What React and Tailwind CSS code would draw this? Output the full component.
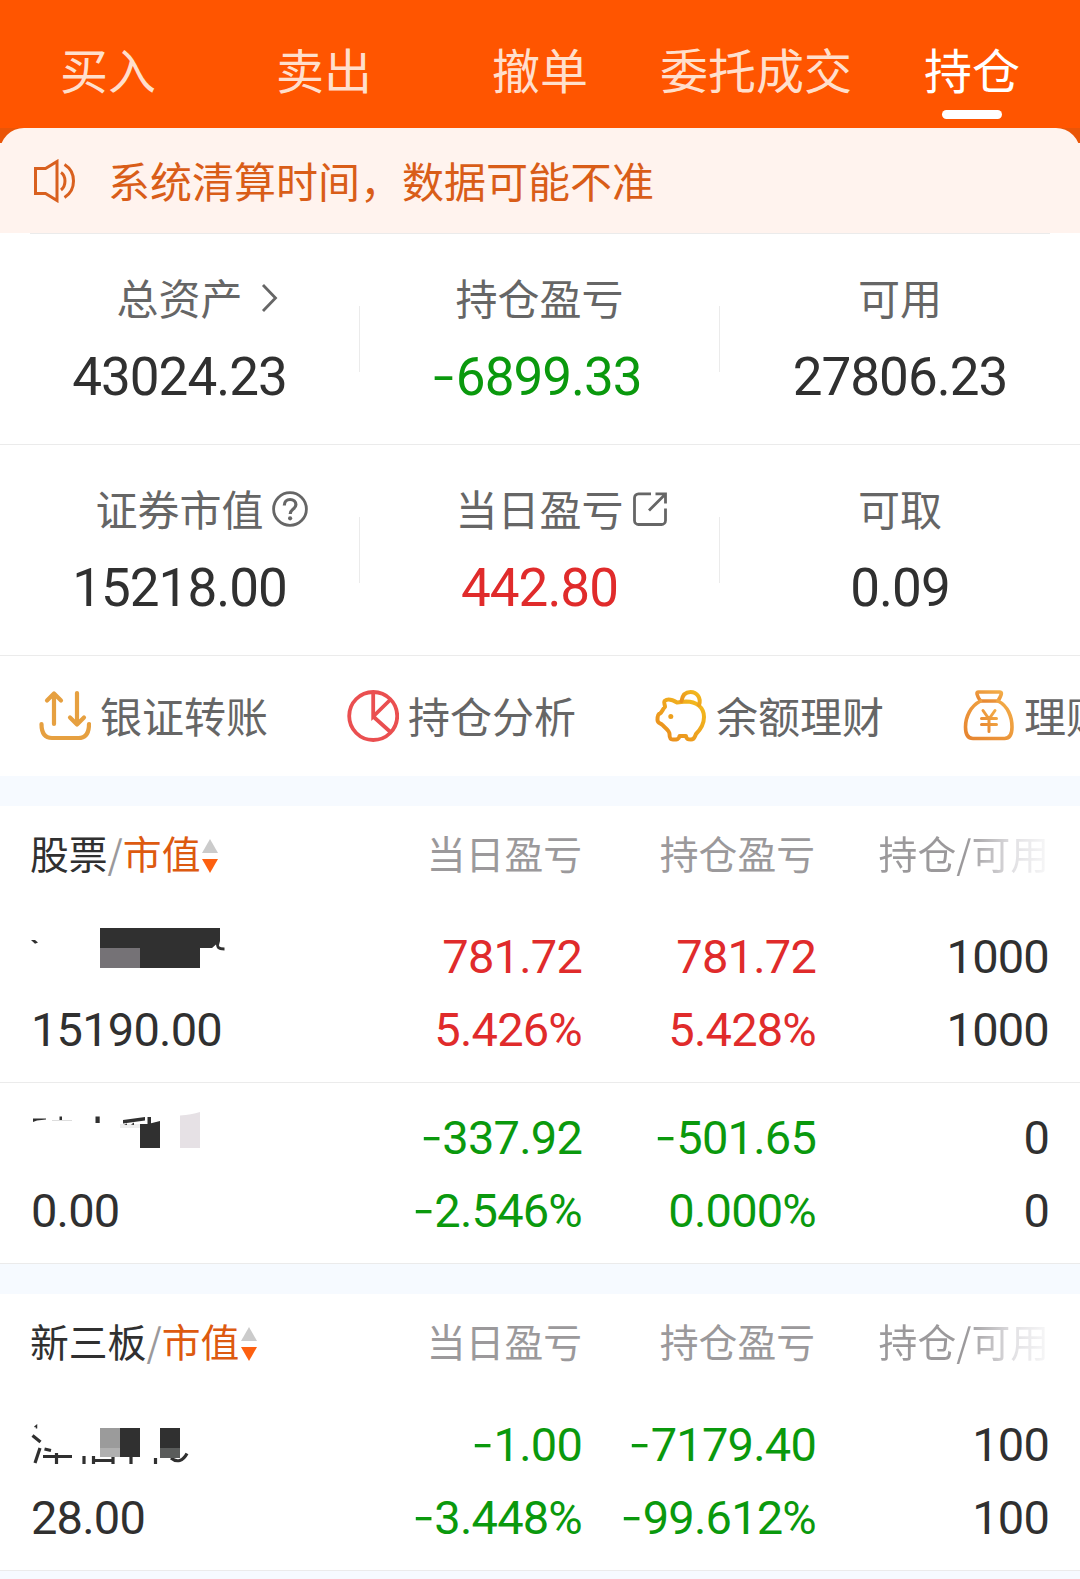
import clsx from "clsx";

const tabs = ["买入", "卖出", "撤单", "委托成交", "持仓"];

const summary = [
  [
    { label: "总资产", value: "43024.23", icon: "chevron" },
    { label: "持仓盈亏", value: "-6899.33", tone: "down" },
    { label: "可用", value: "27806.23" },
  ],
  [
    { label: "证券市值", value: "15218.00", icon: "help" },
    { label: "当日盈亏", value: "442.80", tone: "up", icon: "open" },
    { label: "可取", value: "0.09" },
  ],
];

const sections = [
  {
    title: "股票",
    rows: [
      { mask: MaskOne, market: "15190.00", day: ["781.72", "5.426%"], dayTone: "up", hold: ["781.72", "5.428%"], holdTone: "up", qty: ["1000", "1000"] },
      { mask: MaskTwo, market: "0.00", day: ["-337.92", "-2.546%"], dayTone: "down", hold: ["-501.65", "0.000%"], holdTone: "down", qty: ["0", "0"] },
    ],
  },
  {
    title: "新三板",
    rows: [
      { mask: MaskThree, market: "28.00", day: ["-1.00", "-3.448%"], dayTone: "down", hold: ["-7179.40", "-99.612%"], holdTone: "down", qty: ["100", "100"] },
    ],
  },
];

const tones = {
  up: "text-[#e02b2b]",
  down: "text-[#0a990d]",
};

function LabelIcon({ name }) {
  const base = "absolute top-1/2 mt-px -translate-y-1/2";
  if (name === "chevron") {
    return (
      <svg className={clsx(base, "left-[145px] h-[30px] w-5")} viewBox="0 0 20 30" fill="none" stroke="#666" strokeWidth="2.8">
        <path d="M2 2 14.500 15 2 28" />
      </svg>
    );
  }
  if (name === "help") {
    return (
      <svg className={clsx(base, "left-[177px] h-9 w-9")} viewBox="0 0 36 36" fill="none" stroke="#666" strokeWidth="2.8">
        <circle cx="18" cy="18" r="16.4" />
        <path d="M12.3 14.4c0-3.6 2.4-5.9 5.8-5.9s5.800 2.200 5.800 5.200c0 4.300-5.700 4.600-5.700 9.200" strokeWidth="3.2" />
        <circle cx="18.1" cy="27.3" r="2.1" fill="#666" stroke="none" />
      </svg>
    );
  }
  return (
    <svg className={clsx(base, "left-[177px] h-9 w-9")} viewBox="0 0 36 36" fill="none" stroke="#666" strokeWidth="2.8">
      <path d="M19 2.900H6.500A4 4 0 0 0 2.500 6.900V29.500A4 4 0 0 0 6.500 33.500H29.500A4 4 0 0 0 33.500 29.500V17.500" />
      <path d="M23.500 2.900H33.500V12.500M33 3.400 17 19.500" />
    </svg>
  );
}

function SpeakerIcon() {
  return (
    <svg className="h-11 w-[42px]" viewBox="0 0 42 44" fill="none" stroke="#d9601f" strokeWidth="3">
      <path d="M1.500 9.500H11.500L23 2.500V41.500L11.500 34.500H1.500Z" />
      <path d="M27 13.500C32.300 17 32.300 27 27 31" />
      <path d="M30.500 5.500C42.500 13 42.500 31 30.500 38.500" />
    </svg>
  );
}

function TransferIcon() {
  return (
    <svg className="h-[52px] w-[52px] shrink-0" viewBox="0 0 52 52" fill="none" stroke="#e6a040" strokeWidth="4.2" strokeLinecap="round" strokeLinejoin="round">
      <path d="M15 34V3.500M8 10.500 15 3.500 22 10.500" />
      <path d="M38 3V34M31 27.500 38 34.500 45 27.500" />
      <path d="M2.500 34C2.500 43 6 48 13 48H39.500C46.500 48 50 43 50 34" />
    </svg>
  );
}

function PieIcon() {
  return (
    <svg className="h-[52px] w-[52px] shrink-0" viewBox="0 0 52 52" fill="none" stroke="#ea4f50" strokeWidth="3.800">
      <circle cx="26.200" cy="26" r="24" />
      <path d="M26.200 2V26.500L43.500 9.500M26.200 26.500 44 42.500" />
    </svg>
  );
}

function PiggyIcon() {
  return (
    <svg className="h-[52px] w-[52px] shrink-0" viewBox="0 0 52 52" fill="none" stroke="url(#pig)" strokeWidth="4" strokeLinejoin="round" strokeLinecap="round">
      <defs>
        <linearGradient id="pig" x1="0" y1="1" x2="1" y2="0">
          <stop offset="0" stopColor="#e98a1f" />
          <stop offset="1" stopColor="#f3bd1d" />
        </linearGradient>
      </defs>
      <path d="M22 12.500C17 9.500 12 9 9.500 11 8.500 12.500 10 14.500 10 17 7.500 19 7.500 22 5 23.500 2.500 24 2.500 27 2.500 30 2.500 33 5 33 7.500 35 10 38 14.500 40 14.500 44 14.500 48 15 49.500 18 49.500 22 49.500 24 49.500 24.500 46H31C31.500 49.500 33 49.500 36 49.500 39.500 49.500 39.500 47 41 44 46 39 49 33 49 27 49 17 41 11.500 31 11.500Z" />
      <path d="M26.500 11C27.500 5 31 2 35.500 2 42 2 46.500 8 44 15" />
      <circle cx="15.800" cy="26.500" r="2.500" fill="#eda01e" stroke="none" />
    </svg>
  );
}

function MoneyBagIcon() {
  return (
    <svg className="h-[52px] w-[52px] shrink-0" viewBox="0 0 52 52" fill="none" stroke="url(#bag)" strokeWidth="3.600" strokeLinejoin="round" strokeLinecap="round">
      <defs>
        <linearGradient id="bag" x1="0" y1="1" x2="1" y2="0">
          <stop offset="0" stopColor="#e68430" />
          <stop offset="1" stopColor="#f3ad48" />
        </linearGradient>
      </defs>
      <path d="M15.500 2H37C39.500 2 38.500 5 35 11H17.500C13.500 5 13 2 15.500 2Z" />
      <path d="M17.500 11C7.500 16 2.500 27 2.500 37 2.500 45 5.500 48.500 10 48.500H41.500C46.500 48.500 49 45 49 37 49 27 45 16 35 11" />
      <path d="M20 20.500 26 29 32 20.500M26 29V41.500M18.500 28.500H33.500M18.500 34.500H33.500" strokeWidth="3" />
    </svg>
  );
}

const actions = [
  { label: "银证转账", Icon: TransferIcon },
  { label: "持仓分析", Icon: PieIcon },
  { label: "余额理财", Icon: PiggyIcon },
  { label: "理财", Icon: MoneyBagIcon },
];

// Pixelated covers over the security names
function MaskOne() {
  return (
    <svg className="h-[73px] w-[220px]" viewBox="31 920 220 73" fill="#303030">
      <path d="M31 940H35L38 942.500 35 943.800Z" />
      <path d="M100 928H220V941L219 945 216 944.500 212 948H200V968H140V948H100Z" />
      <path d="M100 948H140V968H100Z" fill="#757276" />
      <path d="M217.500 942C217 947.500 218 949 224.500 949" fill="none" stroke="#303030" strokeWidth="2.800" />
    </svg>
  );
}

function MaskTwo() {
  return (
    <svg className="h-[73px] w-[220px]" viewBox="31 1101 220 73" fill="#303030">
      <path d="M33 1118.500H46V1119.500L37 1120.500 33 1122Z" />
      <path d="M59.500 1116.500H62V1120H59.500ZM95.500 1116.500H99.700V1123H95.500ZM147.500 1117H151V1126H147.500Z" />
      <path d="M52 1120H72V1121H52Z" fill="#ddd" />
      <path d="M120 1124H140V1128H120Z" fill="#eee" />
      <path d="M123 1120 145 1117V1120.500L123 1123.500ZM124 1124.500 127 1123.500V1125ZM131 1124.500 134 1122.500V1125Z" />
      <path d="M140 1124 148 1124 160 1121V1148H140Z" />
      <path d="M180 1115.500C188 1115 194 1114 200 1112V1148H180Z" fill="#e6e1e5" />
    </svg>
  );
}

function MaskThree() {
  return (
    <svg className="h-[73px] w-[220px]" viewBox="31 1408 220 73" fill="none" stroke="#303030" strokeWidth="3.200">
      <path d="M34.500 1427 36.500 1425.500V1428.500" strokeWidth="1.500" />
      <path d="M32.500 1435.500 40.500 1442M40 1448 35 1463M44.500 1449 51 1450.500" />
      <path d="M43 1456.500H72M56.500 1453V1464M84 1456V1464M93.500 1456V1464M113 1456V1464M93 1460.500H114M131 1456V1464M155.500 1458V1464" />
      <path d="M171 1458C177 1463 183 1461 187 1453.500" />
      <path d="M100 1428H120V1448H100Z" fill="#9b9b9b" stroke="none" />
      <path d="M100 1448H120V1457H100Z" fill="#b0b0b0" stroke="none" />
      <path d="M120 1428H140V1457H120ZM160 1428H180V1448H160Z" fill="#303030" stroke="none" />
      <path d="M160 1448H180V1458H160Z" fill="#5a5c5b" stroke="none" />
    </svg>
  );
}

// The minus sign is wider than Roboto's own hyphen
function Amount({ value }) {
  if (!value.startsWith("-")) return value;
  return (
    <>
      <span className="inline-block origin-right -translate-y-0.5 scale-x-[1.3] pr-px font-['Noto_Sans_CJK_SC',sans-serif] leading-none">-</span>
      {value.slice(1)}
    </>
  );
}

function Cell({ lines, tone }) {
  return (
    <div className={clsx("text-right", tones[tone])}>
      {lines.map((line, i) => (
        <div key={i} className="h-[73px]">
          <Amount value={line} />
        </div>
      ))}
    </div>
  );
}

function Section({ title, rows }) {
  return (
    <section className="bg-white">
      <div className="grid h-24 grid-cols-[319px_233px_233px_234px] items-center pb-[4px] pl-[30px] text-[38.8px] leading-[56px] text-[#9b999b]">
        <div className="flex items-center">
          <span className="text-[#303030]">{title}</span>
          <span>/</span>
          <span className="text-[#dd5a10]">市值</span>
          <svg className="ml-0.5 mt-[7px] h-[34px] w-4" viewBox="0 0 16 34">
            <path d="M8 0 16 14H0Z" fill="#cbcbcb" />
            <path d="M0 20H16L8 34Z" fill="#fd6010" />
          </svg>
        </div>
        <div className="text-right">当日盈亏</div>
        <div className="text-right">持仓盈亏</div>
        <div className="bg-linear-to-r from-[#9b999b] from-64% via-[#e2e1e4] via-85% to-[#f5f5f6] to-98% bg-clip-text text-right text-transparent">持仓/可用</div>
      </div>
      {rows.map(({ mask: Mask, ...row }, i) => (
        <div key={i} className="grid h-[181px] grid-cols-[317px_234px_234px_233px] border-b border-[#ebebeb] pl-[31px] pt-[18px] font-[Roboto,sans-serif] text-[47px] leading-[73px] tracking-[-0.8px] text-[#303030]">
          <div>
            <div className="h-[73px]">
              <Mask />
            </div>
            <div>{row.market}</div>
          </div>
          <Cell lines={row.day} tone={row.dayTone} />
          <Cell lines={row.hold} tone={row.holdTone} />
          <Cell lines={row.qty} />
        </div>
      ))}
    </section>
  );
}

export default function App() {
  return (
    <div className="h-[1579px] w-[1080px] overflow-hidden bg-[#f6faff] font-['Noto_Sans_CJK_SC',sans-serif]">
      <nav className="grid h-32 grid-cols-5 bg-[#ff5500] text-[48px] leading-[70px] text-[#ffdfcc]">
        {tabs.map((tab, i) => {
          const active = i === tabs.length - 1;
          return (
            <div key={tab} className={clsx("flex flex-col items-center whitespace-nowrap pt-[33px]", active && "text-white")}>
              <span>{tab}</span>
              {active && <span className="mt-[7px] h-[9px] w-[60px] rounded-full bg-white" />}
            </div>
          );
        })}
      </nav>

      <div className="bg-[linear-gradient(#ea5507_15px,#fff3ee_15px)]">
        <div className="flex h-[105px] items-center rounded-t-3xl bg-[#fff3ee] pl-[34px] text-[42px] text-[#d95d18]">
          <SpeakerIcon />
          <span className="-mt-0.5 ml-8">系统清算时间，数据可能不准</span>
        </div>
      </div>

      <div className="bg-white">
        <div className="mx-[30px] h-px bg-[#ebebeb]" />
        {summary.map((row, r) => (
          <div key={r} className="grid h-[211px] grid-cols-3 border-b border-[#ebebeb]">
            {row.map((item, i) => (
              <div key={item.label} className="flex">
                <div className="flex flex-1 flex-col items-center pt-[32px]">
                  <div className="relative text-[42px] leading-[62px] text-[#666]">
                    {item.label}
                    {item.icon && <LabelIcon name={item.icon} />}
                  </div>
                  <div className={clsx("mt-[11px] h-[76px] font-[Roboto,sans-serif] text-[53px] leading-[76px] tracking-[-1px]", item.tone ? tones[item.tone] : "text-[#303030]")}>
                    <Amount value={item.value} />
                  </div>
                </div>
                {i < 2 && <div className="mt-[72px] h-[66px] w-px bg-[#ebebeb]" />}
              </div>
            ))}
          </div>
        ))}
        <div className="flex h-[120px] gap-[79px] overflow-hidden pl-[39px] text-[42px] leading-[118px] text-[#666]">
          {actions.map(({ label, Icon }) => (
            <div key={label} className="flex shrink-0 items-center gap-[9px]">
              <Icon />
              <span className="-mt-0.5">{label}</span>
            </div>
          ))}
        </div>
      </div>

      <div className="mt-[30px] flex flex-col gap-[30px]">
        {sections.map((section) => (
          <Section key={section.title} {...section} />
        ))}
      </div>
    </div>
  );
}
